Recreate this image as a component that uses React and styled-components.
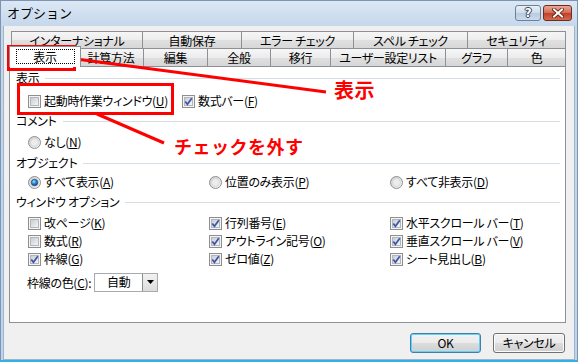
import React from "react";
import styled, { createGlobalStyle } from "styled-components";

const GlobalStyle = createGlobalStyle`
  html, body {
    margin: 0;
    padding: 0;
    background: #ffffff;
  }
`;

const FONT = `"Noto Sans CJK JP", "Noto Sans", sans-serif`;

const Frame = styled.div`
  position: relative;
  width: 578px;
  height: 362px;
  font-family: ${FONT};
  font-feature-settings: "palt";
  font-size: 12px;
  letter-spacing: -0.3px;
  color: #000;
`;

const Window = styled.div`
  display: flex;
  flex-direction: column;
  box-sizing: border-box;
  width: 578px;
  height: 362px;
  padding: 0 2px;
  background: linear-gradient(#dbe7f4, #c5d7eb 26px, #b9d6ef);
  border: 1px solid #7d95b0;
  border-bottom: 2px solid #2fb1e3;
`;

const TitleBar = styled.div`
  display: flex;
  align-items: flex-start;
  height: 25px;
  padding: 4px 3px 0 4px;
  box-sizing: border-box;
`;

const Title = styled.div`
  flex: 1;
  font-size: 13px;
  line-height: 16px;
  letter-spacing: 0;
  font-feature-settings: normal;
  color: #000;
`;

const CaptionButton = styled.div`
  display: flex;
  align-items: center;
  justify-content: center;
  box-sizing: border-box;
  width: ${(p) => p.$w}px;
  height: 16px;
  margin-left: 2px;
  border-radius: 3px;
`;

const HelpButton = styled(CaptionButton)`
  border: 1px solid #6f8196;
  background: linear-gradient(#e9f0f8, #cfdcea 50%, #b8cade 50%, #cadbee);
  color: #fff;
  font-family: "DejaVu Sans", sans-serif;
  font-weight: bold;
  font-size: 12px;
  text-shadow: 0 0 1px #35475c, 1px 0 0 #35475c, -1px 0 0 #35475c, 0 1px 0 #35475c, 0 -1px 0 #35475c;
`;

const CloseButton = styled(CaptionButton)`
  border: 1px solid #6e2b1e;
  background: linear-gradient(#e9a995, #d36a51 50%, #bf3f27 50%, #d6694c);
`;

const Client = styled.div`
  flex: 1;
  display: flex;
  flex-direction: column;
  padding: 5px 8px 0 5px;
  background: #f0f0f0;
  border: 1px solid #9fb3c9;
  border-top: none;
`;

const TabStrip = styled.div`
  display: flex;
  flex-direction: column;
  padding: 0 1px 0 2px;
`;

const TabRow = styled.div`
  display: flex;
  height: 18px;
  margin-top: ${(p) => p.$mt || 0}px;
`;

const Tab = styled.div`
  display: flex;
  align-items: center;
  justify-content: center;
  box-sizing: border-box;
  flex: none;
  width: ${(p) => p.$w + 1}px;
  height: 18px;
  margin-right: -1px;
  border: 1px solid #8d9097;
  border-bottom: none;
  background: linear-gradient(#f6f6f6, #ececec 50%, #e0e0e0 50%, #d6d6d6);
  line-height: 14px;
  white-space: nowrap;
`;

const ActiveTab = styled(Tab)`
  position: relative;
  z-index: 2;
  width: ${(p) => p.$w + 5}px;
  height: 21px;
  margin: -2px -3px 0 -2px;
  background: #fff;
`;

const FocusLabel = styled.span`
  display: block;
  width: 57px;
  text-align: center;
  border: 1px dotted #000;
  line-height: 13px;
  margin-top: -1px;
`;

const Panel = styled.div`
  display: flex;
  flex-direction: column;
  box-sizing: border-box;
  height: 257px;
  padding: 4px 5px 0 6px;
  background: #fff;
  border: 1px solid #8d9097;
`;

const Header = styled.div`
  display: flex;
  align-items: center;
  height: 14px;
  margin-top: ${(p) => p.$mt || 0}px;
  line-height: 14px;

  &::after {
    content: "";
    flex: 1;
    height: 1px;
    margin-left: 6px;
    background: #d5dfe5;
  }
`;

const OptionGrid = styled.div`
  display: grid;
  grid-template-columns: ${(p) => p.$cols};
  grid-auto-rows: 18px;
  margin-top: ${(p) => p.$mt || 0}px;
  padding-left: 12px;
`;

const Option = styled.label`
  display: flex;
  align-items: center;
  gap: 3px;
  line-height: 14px;
  white-space: nowrap;

  svg {
    flex: none;
  }
`;

const Key = styled.span`
  text-decoration: underline;
`;

const ColorRow = styled.div`
  display: grid;
  grid-template-columns: 67px 64px;
  align-items: center;
  height: 20px;
  margin-top: ${(p) => p.$mt || 0}px;
  padding-left: 11px;
`;

const Select = styled.div`
  display: flex;
  align-items: center;
  box-sizing: border-box;
  height: 19px;
  border: 1px solid #a7abb0;
  background: #fff;
`;

const SelectValue = styled.span`
  flex: 1;
  padding-left: 12px;
  line-height: 14px;
`;

const SelectArrow = styled.span`
  display: flex;
  align-items: center;
  justify-content: center;
  box-sizing: border-box;
  width: 15px;
  height: 17px;
  border-left: 1px solid #8a8a8a;
  background: linear-gradient(#f2f2f2, #dcdcdc);
`;

const ButtonBar = styled.div`
  display: flex;
  justify-content: flex-end;
  gap: 12px;
  margin-top: 10px;
  padding-right: 1px;
`;

const PushButton = styled.div`
  display: flex;
  align-items: center;
  justify-content: center;
  box-sizing: border-box;
  width: ${(p) => p.$w}px;
  height: 20px;
  border-radius: 3px;
  border: 1px solid ${(p) => (p.$default ? "#3c7fb1" : "#707070")};
  box-shadow: ${(p) => (p.$default ? "inset 0 0 0 1px #62d2f5" : "inset 0 0 0 1px #fbfbfb")};
  background: linear-gradient(#f2f2f2, #ebebeb 50%, #dddddd 50%, #cfcfcf);
  line-height: 14px;
`;

const Overlay = styled.div`
  position: absolute;
  inset: 0;
  pointer-events: none;
`;

const RedBox = styled.div`
  position: absolute;
  box-sizing: border-box;
  left: ${(p) => p.$x}px;
  top: ${(p) => p.$y}px;
  width: ${(p) => p.$w}px;
  height: ${(p) => p.$h}px;
  border: 3px solid #ff0000;
`;

const Callout = styled.div`
  position: absolute;
  left: ${(p) => p.$x}px;
  top: ${(p) => p.$y}px;
  font-size: ${(p) => p.$size}px;
  line-height: ${(p) => p.$size + 4}px;
  font-weight: bold;
  color: #ff0000;
  white-space: nowrap;
  letter-spacing: 0.5px;
  font-feature-settings: normal;
`;

const CheckBox = ({ checked }) => (
  <svg width="13" height="13" viewBox="0 0 13 13">
    <defs>
      <linearGradient id="cbIn" x1="0" y1="0" x2="1" y2="1">
        <stop offset="0" stopColor="#c6cad0" />
        <stop offset="1" stopColor="#f7f7f7" />
      </linearGradient>
    </defs>
    <rect x="0.5" y="0.5" width="12" height="12" fill="#f4f4f4" stroke="#8f8f8f" />
    <rect x="2.5" y="2.5" width="8" height="8" fill="url(#cbIn)" stroke="#b3b7bc" />
    {checked && (
      <path d="M3.3 6.4 L5.4 9.2 L9.8 3.2" fill="none" stroke="#3a56a6" strokeWidth="1.7" />
    )}
  </svg>
);

const Radio = ({ checked }) => (
  <svg width="13" height="13" viewBox="0 0 13 13">
    <defs>
      <linearGradient id="rbOut" x1="0" y1="0" x2="1" y2="1">
        <stop offset="0" stopColor="#c9cbce" />
        <stop offset="1" stopColor="#fafafa" />
      </linearGradient>
      <radialGradient id="rbDot" cx="0.4" cy="0.35" r="0.7">
        <stop offset="0" stopColor="#8fe0ff" />
        <stop offset="0.5" stopColor="#2c8ad6" />
        <stop offset="1" stopColor="#0d3f7a" />
      </radialGradient>
    </defs>
    <circle cx="6.5" cy="6.5" r="6" fill="url(#rbOut)" stroke="#8f8f8f" />
    <circle cx="6.5" cy="6.5" r="4" fill="#ececec" stroke="#d0d2d4" strokeWidth="0.8" />
    {checked && <circle cx="6.5" cy="6.5" r="3.2" fill="url(#rbDot)" stroke="#1b3f6a" strokeWidth="0.7" />}
  </svg>
);

const Check = ({ on, text, k }) => (
  <Option>
    <CheckBox checked={on} />
    <span>
      {text}(<Key>{k}</Key>)
    </span>
  </Option>
);

const RadioOption = ({ on, text, k }) => (
  <Option>
    <Radio checked={on} />
    <span>
      {text}(<Key>{k}</Key>)
    </span>
  </Option>
);

const topTabs = [
  ["インターナショナル", 131],
  ["自動保存", 99],
  ["エラー チェック", 112],
  ["スペル チェック", 114],
  ["セキュリティ", 98],
];

const bottomTabs = [
  ["計算方法", 65],
  ["編集", 64],
  ["全般", 63],
  ["移行", 60],
  ["ユーザー設定リスト", 115],
  ["グラフ", 62],
  ["色", 58],
];

const windowOptions = [
  { text: "改ページ", k: "K", on: false },
  { text: "行列番号", k: "E", on: true },
  { text: "水平スクロール バー", k: "T", on: true },
  { text: "数式", k: "R", on: false },
  { text: "アウトライン記号", k: "O", on: true },
  { text: "垂直スクロール バー", k: "V", on: true },
  { text: "枠線", k: "G", on: true },
  { text: "ゼロ値", k: "Z", on: true },
  { text: "シート見出し", k: "B", on: true },
];

export default function App() {
  return (
    <>
      <GlobalStyle />
      <Frame>
        <Window>
          <TitleBar>
            <Title>オプション</Title>
            <HelpButton $w={26}>?</HelpButton>
            <CloseButton $w={29}>
              <svg width="12" height="10" viewBox="0 0 12 10">
                <path d="M2 1.5 L10 8.5 M10 1.5 L2 8.5" stroke="#5a1a10" strokeWidth="3.6" strokeLinecap="square" />
                <path d="M2 1.5 L10 8.5 M10 1.5 L2 8.5" stroke="#fff" strokeWidth="2" strokeLinecap="square" />
              </svg>
            </CloseButton>
          </TitleBar>
          <Client>
            <TabStrip>
              <TabRow>
                {topTabs.map(([label, w]) => (
                  <Tab key={label} $w={w}>
                    {label}
                  </Tab>
                ))}
              </TabRow>
              <TabRow $mt={-1}>
                <ActiveTab $w={67}>
                  <FocusLabel>表示</FocusLabel>
                </ActiveTab>
                {bottomTabs.map(([label, w]) => (
                  <Tab key={label} $w={w}>
                    {label}
                  </Tab>
                ))}
              </TabRow>
            </TabStrip>
            <Panel>
              <Header>表示</Header>
              <OptionGrid $cols="154px 1fr" $mt={7}>
                <Check text="起動時作業ウィンドウ" k="U" on={false} />
                <Check text="数式バー" k="F" on={true} />
              </OptionGrid>

              <Header $mt={4}>コメント</Header>
              <OptionGrid $cols="1fr" $mt={5}>
                <RadioOption text="なし" k="N" on={false} />
              </OptionGrid>

              <Header $mt={5}>オブジェクト</Header>
              <OptionGrid $cols="181px 181px 1fr" $mt={3}>
                <RadioOption text="すべて表示" k="A" on={true} />
                <RadioOption text="位置のみ表示" k="P" on={false} />
                <RadioOption text="すべて非表示" k="D" on={false} />
              </OptionGrid>

              <Header $mt={4}>ウィンドウ オプション</Header>
              <OptionGrid $cols="181px 181px 1fr" $mt={5}>
                {windowOptions.map((o) => (
                  <Check key={o.k} text={o.text} k={o.k} on={o.on} />
                ))}
              </OptionGrid>

              <ColorRow $mt={4}>
                <span>
                  枠線の色(<Key>C</Key>):
                </span>
                <Select>
                  <SelectValue>自動</SelectValue>
                  <SelectArrow>
                    <svg width="7" height="4" viewBox="0 0 7 4">
                      <path d="M0 0 H7 L3.5 4 Z" fill="#000" />
                    </svg>
                  </SelectArrow>
                </Select>
              </ColorRow>
            </Panel>
            <ButtonBar>
              <PushButton $w={71} $default>
                OK
              </PushButton>
              <PushButton $w={72}>キャンセル</PushButton>
            </ButtonBar>
          </Client>
        </Window>

        <Overlay>
          <svg width="578" height="362" viewBox="0 0 578 362">
            <path d="M76 59 L326 92" stroke="#ff0000" strokeWidth="3" />
            <path d="M97 114 L164 143" stroke="#ff0000" strokeWidth="3" />
          </svg>
          <RedBox $x={7} $y={45} $w={69} $h={26} />
          <RedBox $x={17} $y={83} $w={157} $h={32} />
          <Callout $x={334} $y={78} $size={20}>
            表示
          </Callout>
          <Callout $x={174} $y={135} $size={18}>
            チェックを外す
          </Callout>
        </Overlay>
      </Frame>
    </>
  );
}
